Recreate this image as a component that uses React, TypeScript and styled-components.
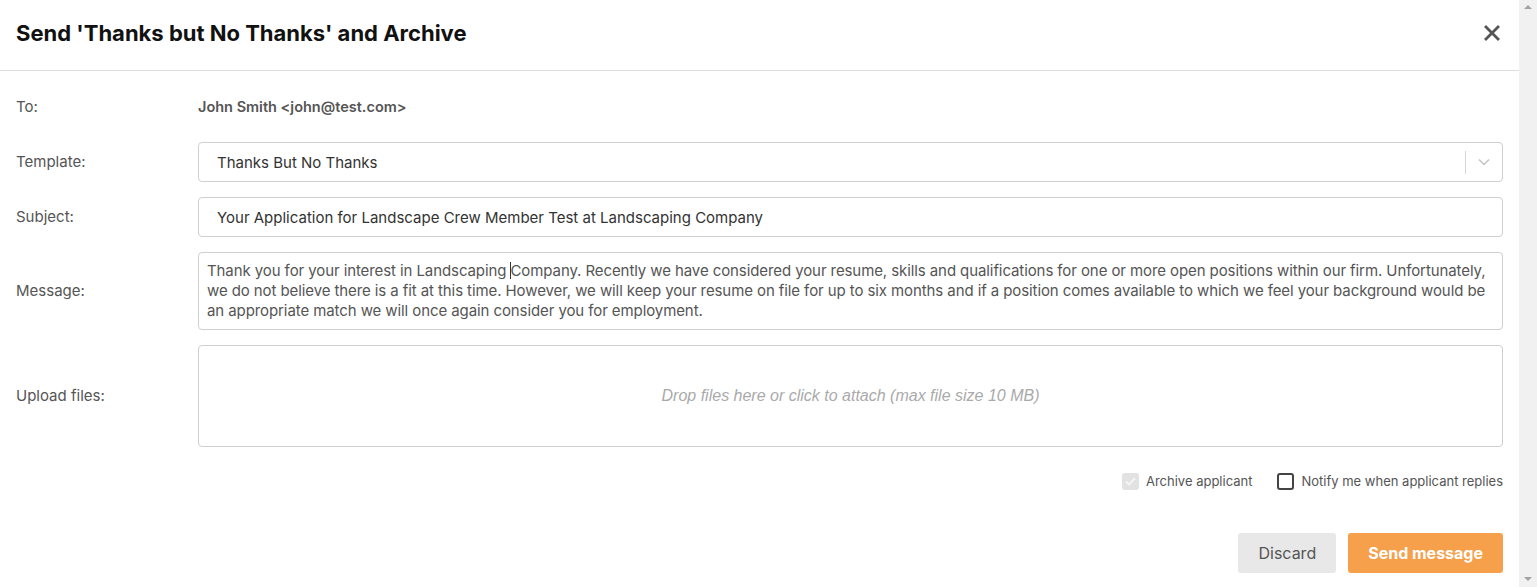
import React from "react";
import styled, { createGlobalStyle } from "styled-components";

const GlobalStyle = createGlobalStyle`
  html, body { height: 100%; }
  body {
    margin: 0;
    background: #fff;
    overflow: hidden;
    font-family: Inter, "Liberation Sans", sans-serif;
  }
  #root { height: 100%; }
`;

const Page = styled.div`
  display: flex;
  height: 100%;
`;

const Dialog = styled.div`
  flex: 1;
  min-width: 0;
  display: flex;
  flex-direction: column;
  background: #fff;
`;

const ScrollTrack = styled.div`
  width: 18px;
  flex: none;
  background: #f1f1f1;
  display: flex;
  flex-direction: column;
  justify-content: space-between;
  align-items: center;
  padding: 5px 0 6px;
  box-sizing: border-box;
`;

const Arrow = styled.span<{ $down?: boolean }>`
  width: 0;
  height: 0;
  border-left: 4px solid transparent;
  border-right: 4px solid transparent;
  ${(p) => (p.$down ? "border-top: 4px solid #a3a3a3;" : "border-bottom: 4px solid #a3a3a3;")}
`;

const Header = styled.header`
  height: 71px;
  display: flex;
  align-items: center;
  justify-content: space-between;
  padding: 0 19px 4px 16px;
  box-sizing: border-box;
  border-bottom: 1px solid #dedede;
`;

const Title = styled.h1`
  margin: 0;
  font-size: 22px;
  font-weight: 700;
  color: #111;
`;

const CloseButton = styled.button`
  width: 16px;
  height: 16px;
  padding: 0;
  border: none;
  background: none;
  display: flex;
  cursor: pointer;
`;

const Form = styled.div`
  display: flex;
  flex-direction: column;
  padding: 16px 16px 12px 16px;
`;

const Row = styled.div<{ $h: number; $mb?: number }>`
  display: grid;
  grid-template-columns: 182px 1fr;
  align-items: center;
  min-height: ${(p) => p.$h}px;
  margin-bottom: ${(p) => p.$mb ?? 15}px;
`;

const Label = styled.div`
  font-size: 15px;
  line-height: 18px;
  padding-bottom: 1px;
  color: #555;
`;

const Recipient = styled.div`
  font-size: 14.5px;
  line-height: 18px;
  padding-bottom: 1px;
  font-weight: 600;
  color: #555;
`;

const Box = styled.div`
  box-sizing: border-box;
  border: 1px solid #cfcfcf;
  border-radius: 4px;
  background: #fff;
`;

const SelectBox = styled(Box)`
  height: 40px;
  display: flex;
  align-items: center;
`;

const SelectValue = styled.div`
  flex: 1;
  padding-left: 18px;
  font-size: 15px;
  color: #333;
`;

const Separator = styled.span`
  width: 1px;
  height: 23px;
  background: #d6d6d6;
`;

const Indicator = styled.div`
  width: 36px;
  display: flex;
  justify-content: center;
  align-items: center;
`;

const InputBox = styled(Box)`
  height: 40px;
  display: flex;
  align-items: center;
  padding-left: 18px;
  font-size: 15px;
  color: #333;
`;

const MessageBox = styled(Box)`
  padding: 8px;
  font-size: 15px;
  line-height: 20px;
  letter-spacing: -0.09px;
  color: #555;
  white-space: nowrap;
`;

const Line = styled.span`
  display: block;
`;

const Caret = styled.span`
  display: inline-block;
  width: 0;
  height: 17px;
  border-left: 1px solid #333;
  margin-right: -1px;
  vertical-align: -3px;
`;

const DropZone = styled(Box)`
  height: 102px;
  display: flex;
  align-items: center;
  justify-content: center;
`;

const DropText = styled.span`
  font-family: "Liberation Sans", Arial, sans-serif;
  font-style: italic;
  font-size: 16px;
  color: #aaa;
`;

const Options = styled.div`
  display: flex;
  justify-content: flex-end;
  align-items: center;
  gap: 25px;
  height: 20px;
  margin-top: 24px;
`;

const Option = styled.label`
  display: flex;
  align-items: center;
  gap: 7px;
  font-size: 13px;
  color: #555;
`;

const CheckSquare = styled.span<{ $disabled?: boolean }>`
  box-sizing: border-box;
  width: 17px;
  height: 17px;
  border-radius: 3px;
  display: flex;
  align-items: center;
  justify-content: center;
  background: ${(p) => (p.$disabled ? "#e2e2e2" : "#fff")};
  border: ${(p) => (p.$disabled ? "none" : "2px solid #444")};
`;

const Actions = styled.div`
  display: flex;
  justify-content: flex-end;
  gap: 12px;
  margin-top: 42px;
`;

const Button = styled.button<{ $primary?: boolean }>`
  height: 40px;
  padding: 0 20px;
  border: none;
  border-radius: 3px;
  font-family: Inter, "Liberation Sans", sans-serif;
  font-size: 16px;
  font-weight: ${(p) => (p.$primary ? 700 : 400)};
  color: ${(p) => (p.$primary ? "#fff" : "#555")};
  background: ${(p) => (p.$primary ? "#f6a04b" : "#e8e8e8")};
  cursor: pointer;
`;

export default function App() {
  return (
    <Page>
      <GlobalStyle />
      <Dialog>
        <Header>
          <Title>Send 'Thanks but No Thanks' and Archive</Title>
          <CloseButton aria-label="Close">
            <svg width="16" height="16" viewBox="0 0 16 16">
              <path d="M2 2 L14 14 M14 2 L2 14" stroke="#555" strokeWidth="2.8" strokeLinecap="square" />
            </svg>
          </CloseButton>
        </Header>
        <Form>
          <Row $h={40}>
            <Label>To:</Label>
            <Recipient>John Smith &lt;john@test.com&gt;</Recipient>
          </Row>
          <Row $h={40}>
            <Label>Template:</Label>
            <SelectBox>
              <SelectValue>Thanks But No Thanks</SelectValue>
              <Separator />
              <Indicator>
                <svg width="12" height="8" viewBox="0 0 12 8">
                  <path d="M1 1.5 L6 6.5 L11 1.5" fill="none" stroke="#c4c4c4" strokeWidth="1.5" />
                </svg>
              </Indicator>
            </SelectBox>
          </Row>
          <Row $h={40}>
            <Label>Subject:</Label>
            <InputBox>Your Application for Landscape Crew Member Test at Landscaping Company</InputBox>
          </Row>
          <Row $h={78}>
            <Label>Message:</Label>
            <MessageBox>
              <Line>
                Thank you for your interest in Landscaping <Caret />Company. Recently we have considered your resume, skills and qualifications for one or more open positions within our firm. Unfortunately,
              </Line>
              <Line>
                we do not believe there is a fit at this time. However, we will keep your resume on file for up to six months and if a position comes available to which we feel your background would be
              </Line>
              <Line>an appropriate match we will once again consider you for employment.</Line>
            </MessageBox>
          </Row>
          <Row $h={102} $mb={0}>
            <Label>Upload files:</Label>
            <DropZone>
              <DropText>Drop files here or click to attach (max file size 10 MB)</DropText>
            </DropZone>
          </Row>
          <Options>
            <Option>
              <CheckSquare $disabled>
                <svg width="11" height="9" viewBox="0 0 11 9">
                  <path d="M1 4.5 L4 7.5 L10 1" fill="none" stroke="#f4f4f4" strokeWidth="2" />
                </svg>
              </CheckSquare>
              Archive applicant
            </Option>
            <Option>
              <CheckSquare />
              Notify me when applicant replies
            </Option>
          </Options>
          <Actions>
            <Button>Discard</Button>
            <Button $primary>Send message</Button>
          </Actions>
        </Form>
      </Dialog>
      <ScrollTrack aria-hidden="true">
        <Arrow />
        <Arrow $down />
      </ScrollTrack>
    </Page>
  );
}
